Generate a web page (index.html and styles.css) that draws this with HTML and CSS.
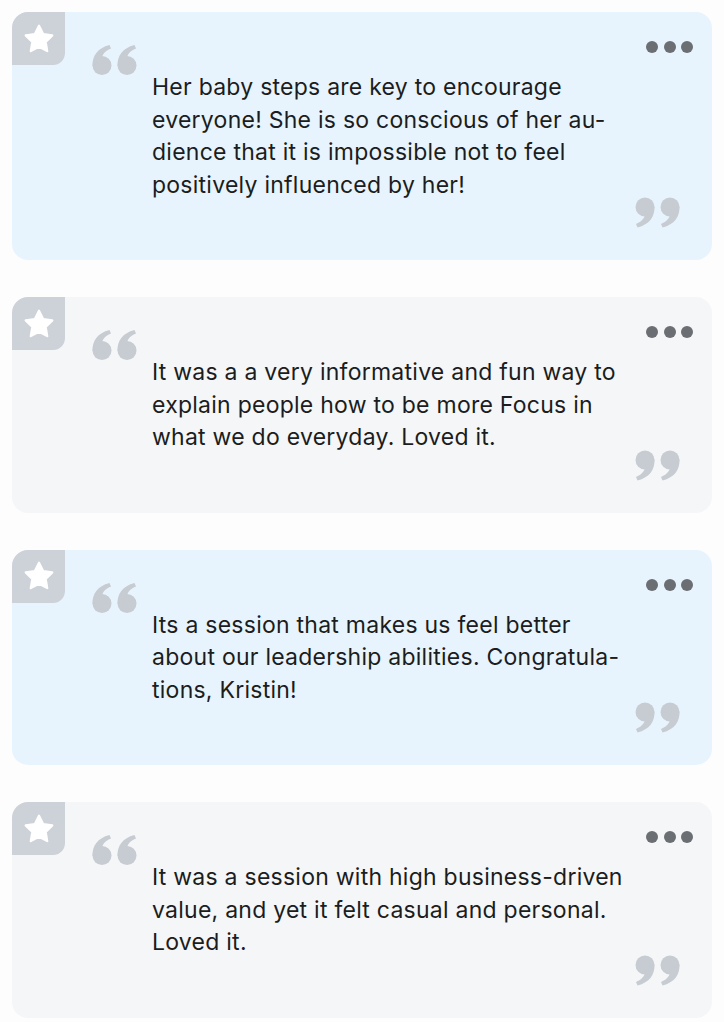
FILE: index.html
```html
<!DOCTYPE html>
<html lang="en">
<head>
<meta charset="utf-8">
<title>Testimonials</title>
<link rel="stylesheet" href="styles.css">
</head>
<body>
<main class="list">
  <article class="card card-blue">
    <span class="badge"><svg viewBox="0 0 24 24" class="star"><path d="M12 2.6l2.9 5.9 6.5.95-4.7 4.6 1.1 6.5L12 17.5l-5.8 3.05 1.1-6.5-4.7-4.6 6.5-.95z"/></svg></span>
    <svg class="open-quote" viewBox="0 0 45 30"><use href="#q66"/></svg>
    <p class="text">Her baby steps are key to encourage<br>everyone! She is so conscious of her au-<br>dience that it is impossible not to feel<br>positively influenced by her!</p>
    <span class="dots"><i></i><i></i><i></i></span>
    <svg class="close-quote" viewBox="0 0 45 30"><use href="#q66" transform="rotate(180 22.5 15)"/></svg>
  </article>
  <article class="card card-grey">
    <span class="badge"><svg viewBox="0 0 24 24" class="star"><path d="M12 2.6l2.9 5.9 6.5.95-4.7 4.6 1.1 6.5L12 17.5l-5.8 3.05 1.1-6.5-4.7-4.6 6.5-.95z"/></svg></span>
    <svg class="open-quote" viewBox="0 0 45 30"><use href="#q66"/></svg>
    <p class="text">It was a a very informative and fun way to<br>explain people how to be more Focus in<br>what we do everyday. Loved it.</p>
    <span class="dots"><i></i><i></i><i></i></span>
    <svg class="close-quote" viewBox="0 0 45 30"><use href="#q66" transform="rotate(180 22.5 15)"/></svg>
  </article>
  <article class="card card-blue">
    <span class="badge"><svg viewBox="0 0 24 24" class="star"><path d="M12 2.6l2.9 5.9 6.5.95-4.7 4.6 1.1 6.5L12 17.5l-5.8 3.05 1.1-6.5-4.7-4.6 6.5-.95z"/></svg></span>
    <svg class="open-quote" viewBox="0 0 45 30"><use href="#q66"/></svg>
    <p class="text">Its a session that makes us feel better<br>about our leadership abilities. Congratula-<br>tions, Kristin!</p>
    <span class="dots"><i></i><i></i><i></i></span>
    <svg class="close-quote" viewBox="0 0 45 30"><use href="#q66" transform="rotate(180 22.5 15)"/></svg>
  </article>
  <article class="card card-grey">
    <span class="badge"><svg viewBox="0 0 24 24" class="star"><path d="M12 2.6l2.9 5.9 6.5.95-4.7 4.6 1.1 6.5L12 17.5l-5.8 3.05 1.1-6.5-4.7-4.6 6.5-.95z"/></svg></span>
    <svg class="open-quote" viewBox="0 0 45 30"><use href="#q66"/></svg>
    <p class="text">It was a session with high business-driven<br>value, and yet it felt casual and personal.<br>Loved it.</p>
    <span class="dots"><i></i><i></i><i></i></span>
    <svg class="close-quote" viewBox="0 0 45 30"><use href="#q66" transform="rotate(180 22.5 15)"/></svg>
  </article>
</main>
<svg class="defs" width="0" height="0" aria-hidden="true">
  <defs>
    <g id="q66">
      <circle cx="10" cy="20.5" r="9.5"/>
      <path d="M0.6 21 C0 11 5.5 3 17.5 0 L19 3.6 C12.5 6.2 9.4 10.5 9.8 16 Z"/>
      <circle cx="35" cy="20.5" r="9.5"/>
      <path d="M25.6 21 C25 11 30.5 3 42.5 0 L44 3.6 C37.5 6.2 34.4 10.5 34.8 16 Z"/>
    </g>
  </defs>
</svg>
</body>
</html>
```
FILE: styles.css
```css
* { box-sizing: border-box; }
html, body { margin: 0; padding: 0; background: #fdfdfe; }
body { font-family: "Inter", "Noto Sans", sans-serif; color: #1b1d20; }

.list {
  display: flex;
  flex-direction: column;
  gap: 37px;
  padding: 12px 12px 0 12px;
}

.card {
  position: relative;
  display: grid;
  grid-template-columns: 140px 1fr 89px;
  grid-template-rows: auto auto;
  border-radius: 16px;
  padding-bottom: 32px;
}
.card-blue { background: #e8f4fd; }
.card-grey { background: #f5f6f8; }

.badge {
  position: absolute;
  top: 0;
  left: 0;
  width: 53px;
  height: 53px;
  background: #cdd1d8;
  border-radius: 16px 0 12px 0;
  display: flex;
  align-items: center;
  justify-content: center;
}
.star {
  width: 34px;
  height: 34px;
  fill: #fff;
  stroke: #fff;
  stroke-width: 1.6;
  stroke-linejoin: round;
}

.open-quote {
  grid-column: 1;
  grid-row: 1;
  width: 45px;
  height: 30px;
  margin: 33px 0 0 80px;
  fill: #c7cbd2;
}

.text {
  grid-column: 2;
  grid-row: 1;
  margin: 59px 0 0 0;
  font-size: 23px;
  line-height: 32.5px;
  white-space: nowrap;
  letter-spacing: 0.25px;
}

.dots {
  grid-column: 3;
  grid-row: 1;
  align-self: start;
  display: flex;
  gap: 5.5px;
  margin: 29px 0 0 23px;
}
.dots i {
  display: block;
  width: 12px;
  height: 12px;
  border-radius: 50%;
  background: #6b6e72;
}

.close-quote {
  grid-column: 3;
  grid-row: 2;
  width: 45px;
  height: 31px;
  margin: -4px 0 0 12px;
  fill: #c7cbd2;
}

.defs { position: absolute; width: 0; height: 0; overflow: hidden; }
```
